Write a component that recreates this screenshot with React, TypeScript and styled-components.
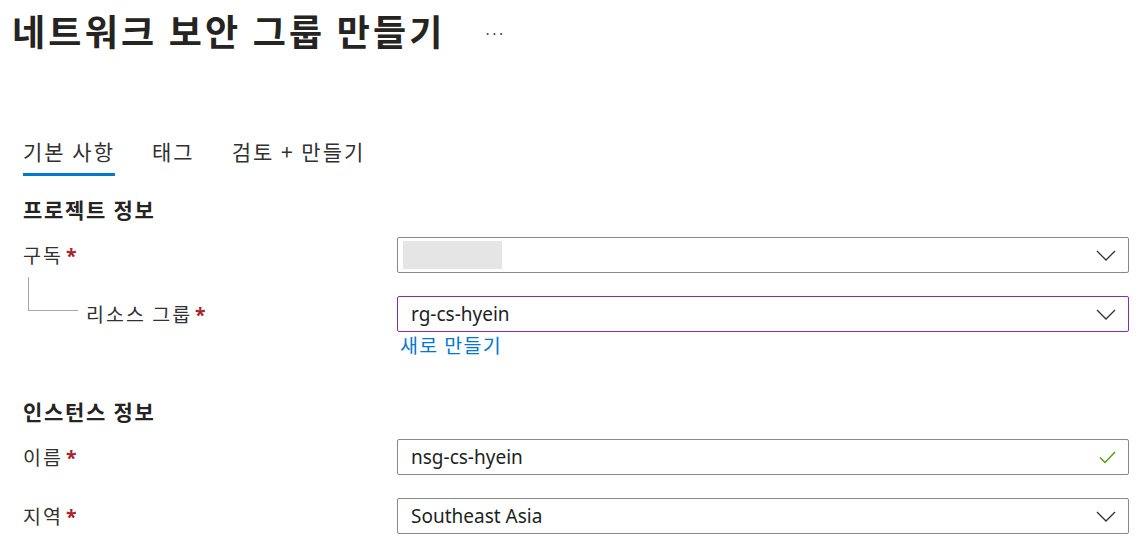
import styled, { createGlobalStyle } from "styled-components";

const GlobalStyle = createGlobalStyle`
  html, body {
    margin: 0;
    padding: 0;
    background: #ffffff;
  }
  body {
    font-family: "Noto Sans", "Noto Sans CJK KR", sans-serif;
    color: #323130;
  }
`;

const Page = styled.div`
  width: 1138px;
  height: 541px;
  overflow: hidden;
  display: flex;
  flex-direction: column;
`;

const Header = styled.header`
  display: flex;
  align-items: center;
  padding: 8px 0 0 12px;
  height: 44px;
`;

const Title = styled.h1`
  margin: 0;
  font-size: 36px;
  line-height: 44px;
  font-weight: 600;
  letter-spacing: 3.2px;
  color: #252423;
  font-family: "Noto Sans CJK KR", sans-serif;
`;

const More = styled.span`
  margin-left: 40px;
  margin-top: -2px;
  font-size: 14px;
  letter-spacing: 3px;
  color: #323130;
`;

const Body = styled.main`
  padding: 0 9px 0 23px;
  display: flex;
  flex-direction: column;
`;

const Tabs = styled.nav`
  display: flex;
  gap: 37px;
  margin-top: 86px;
`;

const Tab = styled.span<{ $active?: boolean }>`
  font-family: "Noto Sans CJK KR", sans-serif;
  font-size: 21px;
  line-height: 26px;
  letter-spacing: 2px;
  padding-bottom: 9px;
  border-bottom: 3px solid ${p => (p.$active ? "#0078d4" : "transparent")};
  color: #323130;
`;

const Section = styled.h2<{ $top: number }>`
  margin: ${p => p.$top}px 0 14px;
  font-family: "Noto Sans CJK KR", sans-serif;
  font-size: 21px;
  line-height: 28px;
  font-weight: 600;
  letter-spacing: 1.7px;
  color: #252423;
`;

const Rows = styled.div`
  display: flex;
  flex-direction: column;
  gap: 23px;
`;

const Row = styled.div`
  display: grid;
  grid-template-columns: 374px 1fr;
`;

const LabelCell = styled.div`
  display: flex;
  align-items: flex-start;
  height: 36px;
`;

const Connector = styled.span`
  width: 49px;
  height: 33px;
  margin: -19px 0 0 5px;
  border-left: 1px solid #a8a8a8;
  border-bottom: 1px solid #a8a8a8;
  flex-shrink: 0;
`;

const Label = styled.label<{ $indent?: boolean }>`
  font-family: "Noto Sans CJK KR", sans-serif;
  font-size: 19.5px;
  line-height: 36px;
  letter-spacing: 2px;
  margin-left: ${p => (p.$indent ? "8px" : "0")};
  color: #323130;
`;

const Required = styled.span`
  color: #a4262c;
  margin-left: 3px;
  font-family: "Noto Sans", sans-serif;
  font-weight: 700;
  letter-spacing: 0;
`;

const Field = styled.div`
  display: flex;
  flex-direction: column;
`;

const Input = styled.div<{ $focus?: boolean }>`
  height: 36px;
  box-sizing: border-box;
  border: 1px solid ${p => (p.$focus ? "#8a2da5" : "#8a8886")};
  border-radius: 2px;
  display: flex;
  align-items: center;
  padding: 0 12px 0 13px;
`;

const Value = styled.span`
  flex: 1;
  font-size: 19px;
  color: #201f1e;
  font-family: "Noto Sans", "Noto Sans CJK KR", sans-serif;
`;

const Masked = styled.span`
  width: 99px;
  height: 28px;
  background: #e5e5e5;
  margin-left: -8px;
  margin-right: auto;
`;

const Link = styled.a`
  font-family: "Noto Sans CJK KR", sans-serif;
  font-size: 19.5px;
  line-height: 24px;
  letter-spacing: 1.3px;
  color: #0078d4;
  margin: 1px 0 0 3px;
  text-decoration: none;
`;

const Chevron = () => (
  <svg width="20" height="11" viewBox="0 0 20 11" fill="none">
    <path d="M1 1l9 9 9-9" stroke="#323130" strokeWidth="1.3" />
  </svg>
);

const Check = () => (
  <svg width="17" height="13" viewBox="0 0 17 13" fill="none">
    <path d="M1 6.5l5 5L16 1" stroke="#57a300" strokeWidth="1.5" />
  </svg>
);

const App = () => (
  <Page>
    <GlobalStyle />
    <Header>
      <Title>네트워크 보안 그룹 만들기</Title>
      <More>...</More>
    </Header>
    <Body>
      <Tabs>
        <Tab $active>기본 사항</Tab>
        <Tab>태그</Tab>
        <Tab>검토 + 만들기</Tab>
      </Tabs>

      <Section $top={19}>프로젝트 정보</Section>
      <Rows>
        <Row>
          <LabelCell>
            <Label>
              구독<Required>*</Required>
            </Label>
          </LabelCell>
          <Field>
            <Input>
              <Masked />
              <Chevron />
            </Input>
          </Field>
        </Row>
        <Row>
          <LabelCell>
            <Connector />
            <Label $indent>
              리소스 그룹<Required>*</Required>
            </Label>
          </LabelCell>
          <Field>
            <Input $focus>
              <Value>rg-cs-hyein</Value>
              <Chevron />
            </Input>
            <Link href="#">새로 만들기</Link>
          </Field>
        </Row>
      </Rows>

      <Section $top={40}>인스턴스 정보</Section>
      <Rows>
        <Row>
          <LabelCell>
            <Label>
              이름<Required>*</Required>
            </Label>
          </LabelCell>
          <Field>
            <Input>
              <Value>nsg-cs-hyein</Value>
              <Check />
            </Input>
          </Field>
        </Row>
        <Row>
          <LabelCell>
            <Label>
              지역<Required>*</Required>
            </Label>
          </LabelCell>
          <Field>
            <Input>
              <Value>Southeast Asia</Value>
              <Chevron />
            </Input>
          </Field>
        </Row>
      </Rows>
    </Body>
  </Page>
);

export default App;
